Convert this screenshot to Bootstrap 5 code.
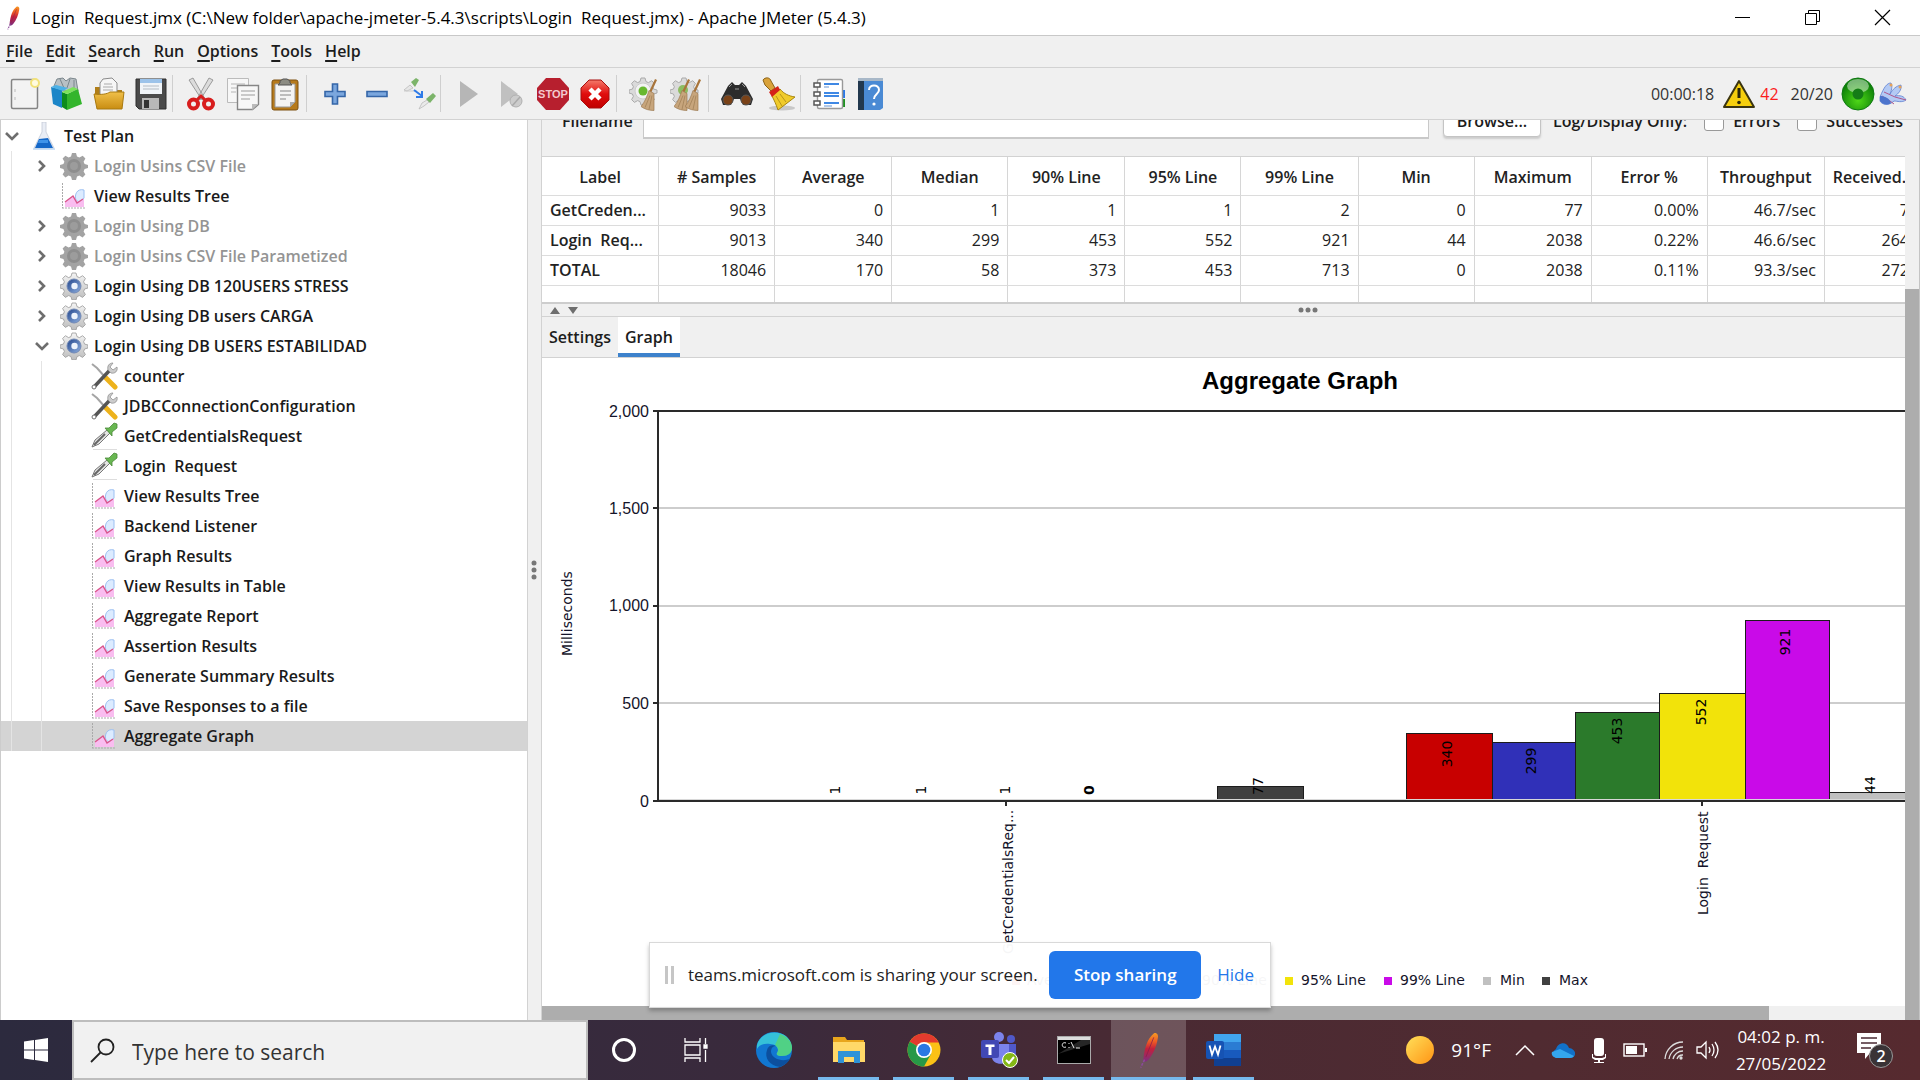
<!DOCTYPE html>
<html lang="en">
<head>
<meta charset="utf-8">
<meta name="viewport" content="width=device-width, initial-scale=1">
<title>Login Request.jmx - Apache JMeter (5.4.3)</title>
<link href="https://cdn.jsdelivr.net/npm/bootstrap@5.3.0/dist/css/bootstrap.min.css" rel="stylesheet">
<style>
  :root { --ui-grey: #f0f0f0; --ui-line: #d2d2d2; }
  body { font-family: "Open Sans", "Noto Sans", sans-serif; font-size: 16px; line-height: 30px; color: #1c1c1c; background: var(--ui-grey); }
  button { font: inherit; color: inherit; }
  .svg-defs { width: 0; height: 0; position: absolute; }
  .semi { font-weight: 600; }

  .title-bar { height: 35px; background: #fff; color: #000; padding-left: 6px; padding-right: 29px; }
  .title-text { font-size: 17px; white-space: pre; }
  .win-controls { gap: 53px; }
  .plain-btn { border: 0; background: none; padding: 0; line-height: 1; display: flex; align-items: center; justify-content: center; }
  .menu-bar { height: 33px; border-top: 1px solid #c8c8c8; border-bottom: 1px solid var(--ui-line); padding: 0 6px 2px; gap: 13px; }
  .menu-bar a { color: inherit; text-decoration: none; font-weight: 600; }
  .menu-bar u { text-underline-offset: 3px; text-decoration-thickness: 2px; }
  .tool-bar { height: 52px; border-bottom: 1px solid var(--ui-line); padding: 0 13px 0 4px; }
  .tool-btn { width: 42px; height: 38px; }
  .tool-sep { width: 8px; height: 37px; border-left: 1px solid #cfcfcf; }
  .run-state { color: #333; line-height: 20px; }
  .err-count { color: #fb1c1c; }

  .tree-pane { width: 528px; background: #fff; border-left: 1px solid #ccc; border-right: 1px solid var(--ui-line); padding-top: 1px; }
  .tree-row { height: 30px; line-height: 32px; white-space: pre; display: flex; align-items: center; font-weight: 600; color: #1a1a1a; position: relative; }
  .tree-row.dim { color: #949494; }
  .tree-row.picked { background-color: #d4d4d4; }
  .lvl-1, .lvl-2 { padding-left: 30px; background-image: linear-gradient(#e4e4e4, #e4e4e4); background-repeat: no-repeat; background-size: 1px 100%; background-position: 10px 0; }
  .lvl-2 { padding-left: 60px; background-image: linear-gradient(#e4e4e4, #e4e4e4), linear-gradient(#e4e4e4, #e4e4e4); background-size: 1px 100%, 1px 100%; background-position: 10px 0, 40px 0; }
  .twist { width: 22px; height: 30px; }
  .node-icon { width: 28px; height: 28px; margin: 0 6px 0 7px; }
  .v-split { width: 14px; border-right: 1px solid var(--ui-line); padding-right: 2px; }

  .form-strip { height: 36px; overflow: hidden; }
  .form-strip .strip-row { height: 36px; margin-top: -17px; padding-left: 20px; padding-right: 2px; white-space: nowrap; }
  .file-box { border: 2px solid #c9c9c9; border-width: 1px 1px 2px 1px; height: 36px; background: #fff; border-radius: 0; margin-left: 10px; margin-right: 14px; padding: 0 8px; }
  .browse-btn { width: 98px; height: 32px; line-height: 28px; background: #fff; border: 1px solid #c4c4c4; border-radius: 4px; box-shadow: 0 2px 2px #ccc; }
  .tick { width: 20px; height: 20px; appearance: none; background: #fff; border: 1px solid #999; border-radius: 3px; margin: 0 9px 0 17px; }

  .result-wrap { height: 148px; overflow: hidden; border-top: 1px solid var(--ui-line); border-bottom: 2px solid #cdcdcd; background: #fff; }
  .result-table { table-layout: fixed; width: 1399px; border-collapse: separate; border-spacing: 0; font-size: 16px; }
  .result-table th, .result-table td { border-right: 1px solid #d6d6d6; border-bottom: 1px solid #dcdcdc; padding: 0 8px; height: 30px; line-height: 29px; white-space: pre; text-align: right; overflow: hidden; color: #222; }
  .result-table th { height: 39px; text-align: center; font-weight: 600; padding: 2px 0 0; }
  .result-table th:nth-child(odd) { width: 117px; }
  .result-table th:nth-child(even) { width: 116px; }
  .result-table td:first-child { text-align: left; font-weight: 600; padding-right: 0; }
  .result-table th:last-child { text-align: left; padding-left: 8px; }
  .result-table td:last-child { padding-right: 31px; }
  .h-split { height: 13px; border-bottom: 1px solid var(--ui-line); }
  .h-split-end { width: 43%; }
  .tab-strip { height: 41px; border-bottom: 1px solid var(--ui-line); }
  .tab-btn { border: 0; background: none; padding: 4px 7px 0; height: 40px; line-height: 30px; font-weight: 600; border-bottom: 4px solid transparent; }
  .tab-btn.on { background: #fff; border-bottom-color: #3d82cc; }
  .chart-box { background: #fff; min-height: 0; overflow: hidden; }
  .chart-box text { font-family: "DejaVu Sans", sans-serif; font-size: 14px; fill: #14142a; white-space: pre; }
  .chart-box .axis-no text { font-family: "Liberation Sans", sans-serif; font-size: 16px; text-anchor: end; }
  .chart-box .chart-title { font-family: "Liberation Sans", sans-serif; font-size: 24px; font-weight: 700; fill: #000; text-anchor: middle; }
  .chart-box .bar-no text { text-anchor: middle; fill: #000; }
  .h-scroll { height: 14px; background: var(--ui-grey); }
  .h-thumb { width: 90%; background: #adadad; }
  .v-scroll { width: 15px; background: var(--ui-grey); border-right: 1px solid #c4c4c4; padding-top: 169px; }
  .v-thumb { background: #adadad; }
  .shrinkable { min-width: 0; min-height: 0; }

  .share-pop { left: 50%; bottom: 72px; transform: translateX(-50%); height: 66px; width: 622px; background: rgba(255,255,255,.96); border: 1px solid #d9d9d9; box-shadow: 0 3px 4px rgba(0,0,0,.25); padding: 0 16px 0 15px; color: #222; z-index: 5; white-space: nowrap; font-size: 17px; }
  .grip { width: 9px; height: 18px; border: solid #c6c6c6; border-width: 0 3px; margin-right: 14px; }
  .stop-btn { width: 152px; height: 48px; background: #2277ea; color: #fff; border: 0; border-radius: 6px; font-weight: 600; padding: 0; }
  .hide-link { color: #2277ea; text-decoration: none; }

  .task-bar { height: 60px; background: linear-gradient(90deg, #2c2a3e, #3a2a3c 40%, #4a2a33 60%, #502b31 80%, #562a2f); color: #fff; }
  .start-btn { width: 72px; }
  .search-box { width: 516px; height: 60px; background: #f1f1f1; border: 2px solid #bdbdbd; padding-left: 16px; gap: 17px; }
  .search-box input { border: 0; background: none; outline: 0; font-size: 21px; color: #333; padding: 3px 0 0; min-width: 0; }
  .search-box input::placeholder { color: #333; opacity: 1; }
  .task-app { width: 75px; height: 60px; position: relative; }
  .task-app.narrow { width: 72px; }
  .task-app.open::after { content: ""; position: absolute; left: 7px; right: 7px; bottom: 0; height: 3px; background: #76b9ed; }
  .task-app.current { background: rgba(255,255,255,.2); }
  .task-app.current::after { left: 0; right: 0; }
  .tray { line-height: 27px; padding-right: 26px; }
  .clock { font-size: 17px; width: 102px; }
  .temp { font-size: 19px; }
</style>
</head>
<body class="vh-100 overflow-hidden d-flex flex-column">

<svg class="svg-defs" aria-hidden="true">
  <defs>
    <linearGradient id="gGear" x1="0" y1="0" x2="0" y2="1"><stop offset="0" stop-color="#f4f4f4"/><stop offset="1" stop-color="#bdbdbd"/></linearGradient>
    <linearGradient id="gBlue" x1="0" y1="0" x2="1" y2="1"><stop offset="0" stop-color="#23468c"/><stop offset="1" stop-color="#8fb0e0"/></linearGradient>
    <linearGradient id="gFeather" x1="0" y1="0" x2="0" y2="1"><stop offset="0" stop-color="#f69923"/><stop offset=".3" stop-color="#ee5a24"/><stop offset=".55" stop-color="#c4203c"/><stop offset="1" stop-color="#7d2f80"/></linearGradient>
    <radialGradient id="gGreen" cx=".5" cy=".7" r=".6"><stop offset="0" stop-color="#4fd818"/><stop offset="1" stop-color="#0c7f08"/></radialGradient>
    <linearGradient id="gFold" x1="0" y1="0" x2="0" y2="1"><stop offset="0" stop-color="#f0c04a"/><stop offset="1" stop-color="#c98d12"/></linearGradient>
    <linearGradient id="gRed" x1="0" y1="0" x2="0" y2="1"><stop offset="0" stop-color="#f47a6a"/><stop offset=".5" stop-color="#e00d0d"/><stop offset="1" stop-color="#c00000"/></linearGradient>
    <path id="gearShape" d="M12 1h4l1 3.600 2.400 1 3.300-1.900 2.700 2.800-1.800 3.200 1 2.400L28 13v3l-3.400 1-1 2.400 1.800 3.200-2.800 2.800-3.200-1.800-2.400 1L16 28h-4l-1-3.400-2.400-1-3.200 1.800-2.800-2.800 1.800-3.200-1-2.400L0 16v-3l3.400-.9 1-2.400-1.800-3.200 2.800-2.800 3.200 1.900 2.400-1z"/>
    <symbol id="i-gear" viewBox="0 0 28 28"><use href="#gearShape" fill="url(#gGear)" stroke="#999" stroke-width=".8"/><circle cx="14" cy="14" r="7" fill="url(#gBlue)" stroke="#7289b5"/><circle cx="14.500" cy="14" r="3.200" fill="#eef4fc"/></symbol>
    <symbol id="i-gear-off" viewBox="0 0 28 28"><use href="#gearShape" fill="#a3a3a3"/><circle cx="14" cy="14" r="7" fill="#8e8e8e"/><circle cx="14" cy="14" r="4" fill="#9c9c9c"/></symbol>
    <symbol id="i-chart" viewBox="0 0 28 28"><path d="M2.500 1v25M2 26h24" stroke="#aaa" stroke-dasharray="2 1" fill="none"/><path d="M24 8c-7-2-10 5-8 10l4 3 4-5z" fill="#dcebff" stroke="#9cc0f2"/><path d="M5 25v-5l8-6 5 6 6-3v8z" fill="#f9bdf0"/><path d="M5 20l8-6 4 7 6-4" fill="none" stroke="#d8568c" stroke-width="1.400"/></symbol>
    <symbol id="i-flask" viewBox="0 0 28 28"><path d="M12 0h4v10l8 16H4l8-16z" fill="#e9edf5" stroke="#c3c9d6" stroke-width=".8"/><path d="M9 17l9-1 5 10H5z" fill="#1568c8"/><path d="M9 18h9v3H8z" fill="#3f94ea"/><path d="M3 27h22" stroke="#9cc4ee"/></symbol>
    <symbol id="i-tools" viewBox="0 0 28 28"><path d="M2 2l5 4 8 9" stroke="#a5a5a5" stroke-width="2" fill="none"/><path d="M16 16l9 9" stroke="#edb21c" stroke-width="5" stroke-linecap="round"/><path d="M4 25L19 9" stroke="#555" stroke-width="3.500" stroke-linecap="round"/><path d="M23 1l-3 4 3 3 4-3c1 4-2 7-6 6l-3-3c-1-4 1-7 5-7z" fill="#ccc" stroke="#888" stroke-width=".7"/><circle cx="4" cy="25" r="2" fill="#fff" stroke="#777"/></symbol>
    <symbol id="i-drop" viewBox="0 0 28 28"><path d="M3 27.500h24" stroke="#ddd"/><path d="M2 25l3-7L17 8l3 3L9 22z" fill="#e4e4e4" stroke="#777" stroke-width="1"/><path d="M4 23L15 12" stroke="#666" stroke-width="2"/><path d="M15 6l4 0 5-5 3 1 0 4-5 4 0 4z" fill="#69b752" stroke="#4b8a3a" stroke-width=".8"/></symbol>
    <symbol id="i-right" viewBox="0 0 14 14"><path d="M4 2l5 5-5 5" fill="none" stroke="#6e6e6e" stroke-width="2.600"/></symbol>
    <symbol id="i-down" viewBox="0 0 14 14"><path d="M1 4l6 6 6-6" fill="none" stroke="#6e6e6e" stroke-width="2.600"/></symbol>
    <symbol id="i-feather" viewBox="0 0 16 28"><path d="M12 1c2-1 4 1 3 4-1 6-3 11-7 16-2 2-4 2-4 0C5 12 7 5 12 1z" fill="url(#gFeather)"/><path d="M12 4L6 19" stroke="#8c1f4a" stroke-width=".6"/><path d="M5 21l-3 6" stroke="#8a4a9a" stroke-width="1.200" stroke-dasharray="2 1"/></symbol>
    <symbol id="i-broom" viewBox="0 0 18 32"><path d="M15 1l-6 13" stroke="#a8743a" stroke-width="2.200"/><path d="M8 12l5 3 0 17c-4 0-9-1-13-4 4-5 6-10 8-16z" fill="#c7a57c" stroke="#9c7a52" stroke-width=".7"/><path d="M9 17L4 29M11 17L8 31" stroke="#a28158" stroke-width=".8"/></symbol>
  </defs>
</svg>

<header class="title-bar d-flex align-items-center flex-shrink-0">
  <svg width="14" height="26" viewBox="0 0 16 28"><use href="#i-feather"/></svg>
  <span class="title-text ms-2 ps-1 flex-grow-1">Login  Request.jmx (C:\New folder\apache-jmeter-5.4.3\scripts\Login  Request.jmx) - Apache JMeter (5.4.3)</span>
  <div class="win-controls d-flex align-items-center">
    <button class="plain-btn" aria-label="Minimize"><svg width="17" height="17"><path d="M1 8.500h15" stroke="#000"/></svg></button>
    <button class="plain-btn" aria-label="Restore"><svg width="17" height="17" fill="none" stroke="#000"><path d="M1.500 4.500h11v11h-11zM4.500 4.500v-3h11v11h-3"/></svg></button>
    <button class="plain-btn" aria-label="Close"><svg width="17" height="17"><path d="M1 1l15 15M16 1L1 16" stroke="#000" stroke-width="1.200"/></svg></button>
  </div>
</header>

<nav class="menu-bar d-flex align-items-center flex-shrink-0">
  <a href="#"><u>F</u>ile</a><a href="#"><u>E</u>dit</a><a href="#"><u>S</u>earch</a><a href="#"><u>R</u>un</a><a href="#"><u>O</u>ptions</a><a href="#"><u>T</u>ools</a><a href="#"><u>H</u>elp</a>
</nav>

<div class="tool-bar d-flex align-items-center flex-shrink-0">
  <button class="plain-btn tool-btn" aria-label="New"><svg width="32" height="34" viewBox="0 0 32 34"><rect x="2.500" y="2.500" width="26" height="29" rx="1.500" fill="#f3f3f3" stroke="#848484" stroke-width="1.500"/><path d="M6 12v3M6 20v3" stroke="#bbb"/><circle cx="26" cy="6" r="4" fill="#fffbe0" stroke="#f2e27a" stroke-width="2"/></svg></button>
  <button class="plain-btn tool-btn" aria-label="Templates"><svg width="34" height="34" viewBox="0 0 34 34"><path d="M4 9l3-7 6-1 3 3 4-3 6 1 2 12H6z" fill="#b9c0c4" stroke="#7b868c"/><path d="M10 2l4 9M20 2l-3 9M24 3v8" stroke="#7b868c"/><path d="M1 10l11 3v18L3 27z" fill="#1c86c8"/><path d="M1 10l5-2 12 3-5 3z" fill="#4db1e6"/><path d="M12 15l5 2v16l-5-3z" fill="#0e8c1d"/><path d="M17 17l11-5 4 15-15 6z" fill="#33b52c"/><path d="M12 15l11-5 5 2-11 5z" fill="#7be35a"/></svg></button>
  <button class="plain-btn tool-btn" aria-label="Open"><svg width="34" height="34" viewBox="0 0 34 34"><path d="M3 10h7l3 3h17v12H3z" fill="#b07e18"/><path d="M8 6l3-4 9-1 5 5v13H8z" fill="#f6f6f6" stroke="#8b8b8b"/><path d="M12 7h8M11 10h10M11 13h10" stroke="#aaa"/><path d="M2 17c8 1 13 0 16-2h14l-2 17H5z" fill="url(#gFold)" stroke="#a97a10"/></svg></button>
  <button class="plain-btn tool-btn" aria-label="Save"><svg width="34" height="34" viewBox="0 0 34 34"><path d="M2 2h30v30H5l-3-3z" fill="#4a4a4a" stroke="#2e2e2e"/><rect x="6" y="2" width="22" height="15" fill="#f0f4f8"/><path d="M6 2h22v4H6z" fill="#9cc3ea"/><path d="M9 9h16M9 12h16" stroke="#b4bcc4"/><rect x="8" y="21" width="17" height="11" fill="#b8b8b8"/><rect x="10" y="23" width="5" height="8" fill="#333"/></svg></button>
  <span class="tool-sep"></span>
  <button class="plain-btn tool-btn" aria-label="Cut"><svg width="30" height="34" viewBox="0 0 30 34"><path d="M3 3l4-2 12 21-3 1zM27 3l-4-2-12 21 3 1z" fill="#dcdcdc" stroke="#888" stroke-width=".8"/><ellipse cx="7.500" cy="27" rx="4.500" ry="4.500" fill="none" stroke="#d81e1e" stroke-width="4"/><ellipse cx="22.500" cy="27" rx="4.500" ry="4.500" fill="none" stroke="#d81e1e" stroke-width="4"/><path d="M11 23l4-4 4 4" stroke="#d81e1e" stroke-width="3" fill="none"/></svg></button>
  <button class="plain-btn tool-btn" aria-label="Copy"><svg width="34" height="34" viewBox="0 0 34 34"><path d="M1.500 1.500h21v24h-21z" fill="#f7f7f7" stroke="#bbb"/><path d="M5 7h14M5 11h8M5 15h5" stroke="#ccc" stroke-width="1.500"/><path d="M11.500 8.500h21v19l-6 5h-15z" fill="#f7f7f7" stroke="#868686" stroke-width="1.400"/><path d="M15 14h14M15 18h14M15 22h9" stroke="#bbb" stroke-width="1.500"/><path d="M32 27h-6v6z" fill="#bbb"/></svg></button>
  <button class="plain-btn tool-btn" aria-label="Paste"><svg width="30" height="34" viewBox="0 0 30 34"><rect x="2" y="3" width="26" height="30" rx="2" fill="#b67a1c" stroke="#7c5010"/><path d="M5 7h20v18l-5 5H5z" fill="#f4f4f4" stroke="#999"/><path d="M10 6V4l3-2h4l3 2v2l2 2H8z" fill="#8c8c84" stroke="#555"/><path d="M10 14h11M10 18h11M10 22h6" stroke="#aaa" stroke-width="1.500"/><path d="M25 25h-5v5z" fill="#aaa"/></svg></button>
  <span class="tool-sep"></span>
  <button class="plain-btn tool-btn" aria-label="Expand all"><svg width="24" height="24" viewBox="0 0 24 24"><path d="M9.500 2h5v7.500H22v5h-7.500V22h-5v-7.500H2v-5h7.500z" fill="#7ba7de" stroke="#3566a8" stroke-width="1.600"/></svg></button>
  <button class="plain-btn tool-btn" aria-label="Collapse all"><svg width="24" height="24" viewBox="0 0 24 24"><path d="M2 9.500h20v5H2z" fill="#7ba7de" stroke="#3566a8" stroke-width="1.600"/></svg></button>
  <button class="plain-btn tool-btn" aria-label="Toggle"><svg width="34" height="34" viewBox="0 0 34 34"><path d="M2 13l6-5 3 3-6 3z" fill="#e6e6e6" stroke="#bbb" stroke-width=".8"/><path d="M9 5l5-4 3 2-4 7z" fill="#7cb46a"/><path d="M2 14h13" stroke="#ccc"/><path d="M12 13l8 6m0-5v6h-6" fill="none" stroke="#2f7be8" stroke-width="2"/><path d="M17 32l3-6 5-3 2 2-5 4z" fill="#eaeaea" stroke="#bbb" stroke-width=".8"/><path d="M24 22l7-6 3 3-6 7z" fill="#7cb46a"/></svg></button>
  <span class="tool-sep"></span>
  <button class="plain-btn tool-btn" aria-label="Start"><svg width="24" height="30" viewBox="0 0 24 30"><path d="M3 2l18 13L3 28z" fill="#b6b6b6"/></svg></button>
  <button class="plain-btn tool-btn" aria-label="Start no pauses"><svg width="26" height="30" viewBox="0 0 26 30"><path d="M3 2l17 13L3 28z" fill="#c0c0c0"/><circle cx="18" cy="22" r="6" fill="#ccc" stroke="#b0b0b0"/><path d="M14 27l8-9" stroke="#aaa" stroke-width="1.500"/></svg></button>
  <button class="plain-btn tool-btn" aria-label="Stop"><svg width="34" height="34" viewBox="0 0 34 34"><path d="M10 1h14l9 10v12l-9 10H10L1 23V11z" fill="#b71f2e"/><text x="17" y="21" text-anchor="middle" font-family="Liberation Sans, sans-serif" font-size="11" font-weight="700" fill="#f3c8cc">STOP</text></svg></button>
  <button class="plain-btn tool-btn" aria-label="Shutdown"><svg width="30" height="30" viewBox="0 0 30 30"><path d="M9 1h12l8 8v12l-8 8H9l-8-8V9z" fill="url(#gRed)" stroke="#a80f0f"/><path d="M10 10l10 10M20 10L10 20" stroke="#fff" stroke-width="4.500"/></svg></button>
  <span class="tool-sep"></span>
  <button class="plain-btn tool-btn" aria-label="Clear"><svg width="32" height="34" viewBox="0 0 32 34"><use href="#gearShape" fill="#dadada" stroke="#aaa"/><circle cx="14" cy="14" r="8" fill="#f2f2f2" stroke="#ccc"/><circle cx="14" cy="14" r="4.500" fill="#67b82e"/><use href="#i-broom" x="12" y="1" width="18" height="33"/></svg></button>
  <button class="plain-btn tool-btn" aria-label="Clear all"><svg width="34" height="34" viewBox="0 0 34 34"><use href="#gearShape" fill="#dadada" stroke="#aaa"/><circle cx="13" cy="13" r="5" fill="#8cbc60"/><use href="#i-broom" x="4" y="1" width="18" height="33"/><use href="#i-broom" x="15" y="1" width="18" height="33"/></svg></button>
  <span class="tool-sep"></span>
  <button class="plain-btn tool-btn" aria-label="Search"><svg width="34" height="26" viewBox="0 0 34 26"><path d="M8 5l4-4 3 3h4l3-3 4 4 7 13-2 6h-8l-3-6h-6l-3 6H3l-2-6z" fill="#2c2c2c"/><circle cx="8" cy="19" r="5" fill="#7a4218" stroke="#555"/><circle cx="26" cy="19" r="5" fill="#7a4218" stroke="#555"/><path d="M9 6l3-3M22 3l3 3M15 8h4" stroke="#999"/></svg></button>
  <button class="plain-btn tool-btn" aria-label="Reset search"><svg width="34" height="34" viewBox="0 0 34 34"><ellipse cx="20" cy="31" rx="13" ry="2.500" fill="#c8c8c8"/><path d="M1 3c2-3 7-3 8 1l4 7-4 3-6-6z" fill="#d9a23a" stroke="#8a6218"/><path d="M10 19l8-7c4 5 9 7 15 8l-17 13c-2-6-4-10-6-14z" fill="#f0cb2a" stroke="#a88610"/><path d="M14 19l6 10M18 17l6 8" stroke="#b8961a"/><path d="M7 15l9-6 2 4-8 7z" fill="#d42218"/></svg></button>
  <span class="tool-sep"></span>
  <button class="plain-btn tool-btn" aria-label="Function helper"><svg width="34" height="34" viewBox="0 0 34 34"><path d="M30 13h3v8h-3z" fill="#2878e8"/><path d="M30 22h3v8h-3z" fill="#1d9020"/><rect x="5.500" y="2.500" width="25" height="29" rx="1.500" fill="#fff" stroke="#999" stroke-width="1.400"/><path d="M12 7h15M12 16h15M12 19h15M12 26h15" stroke="#3f88e4" stroke-width="2"/><path d="M12 10h5M12 29h8" stroke="#9ab8e0" stroke-width="1.500"/><path d="M2 6h6v4H2zM2 15h6v4H2zM2 24h6v4H2z" fill="#fff" stroke="#555" stroke-width="1.500"/></svg></button>
  <button class="plain-btn tool-btn" aria-label="Help"><svg width="28" height="34" viewBox="0 0 28 34"><path d="M1 2h25v29l-3 2H1z" fill="#4a8ad4"/><path d="M1 2h6v31H1z" fill="#22384e"/><path d="M1 1h25v3H1z" fill="#a8b8c8"/><path d="M12 13c0-6 10-6 10 0 0 4-5 4-5 9" fill="none" stroke="#fff" stroke-width="2"/><circle cx="17" cy="27" r="1.600" fill="#fff"/></svg></button>
  <div class="run-state d-flex align-items-center ms-auto">
    <span>00:00:18</span>
    <svg class="ms-2" width="34" height="30" viewBox="0 0 34 30"><path d="M17 2l15 26H2z" fill="#f6cf0d" stroke="#3b3510" stroke-width="2" stroke-linejoin="round"/><path d="M17 9v10" stroke="#2c2808" stroke-width="3"/><circle cx="17" cy="23.500" r="1.800" fill="#2c2808"/></svg>
    <span class="err-count ms-1">42</span>
    <span class="ms-2 ps-1">20/20</span>
    <svg class="ms-2" width="34" height="34" viewBox="0 0 34 34"><circle cx="17" cy="17" r="16" fill="url(#gGreen)" stroke="#0f7a12"/><ellipse cx="17" cy="9" rx="11" ry="7" fill="#fff" opacity=".45"/><circle cx="17" cy="17" r="5.500" fill="#157c17"/></svg>
    <svg class="ms-1" width="28" height="24" viewBox="0 0 28 24"><path d="M1 15C5 5 8 1 12 1c2 4 0 8-1 11 3-5 6-8 11-9 1 5-3 9-6 11 5-1 9 0 11 4-4 3-9 1-12 1-5 5-12 4-14 0z" fill="#b4caf4" stroke="#5d7fd0" stroke-width=".8"/><path d="M3 14l8 5 4 3M5 10l11 5 11 3" stroke="#b0568c" fill="none"/><path d="M1 14c5 0 9 2 11 7-4 3-9 1-11-2z" fill="#4d74cc"/><circle cx="12" cy="3" r="1.500" fill="#e8a35a"/><circle cx="21" cy="5" r="1.500" fill="#e8a35a"/></svg>
  </div>
</div>

<main class="d-flex flex-grow-1 shrinkable">
  <aside class="tree-pane flex-shrink-0">
    <ul class="list-unstyled m-0">
      <li class="tree-row"><svg class="twist" viewBox="-4 -8 22 30"><use href="#i-down" width="14" height="14"/></svg><svg class="node-icon"><use href="#i-flask"/></svg>Test Plan</li>
      <li class="tree-row lvl-1 dim"><svg class="twist" viewBox="-4 -8 22 30"><use href="#i-right" width="14" height="14"/></svg><svg class="node-icon"><use href="#i-gear-off"/></svg>Login Usins CSV File</li>
      <li class="tree-row lvl-1"><span class="twist"></span><svg class="node-icon"><use href="#i-chart"/></svg>View Results Tree</li>
      <li class="tree-row lvl-1 dim"><svg class="twist" viewBox="-4 -8 22 30"><use href="#i-right" width="14" height="14"/></svg><svg class="node-icon"><use href="#i-gear-off"/></svg>Login Using DB</li>
      <li class="tree-row lvl-1 dim"><svg class="twist" viewBox="-4 -8 22 30"><use href="#i-right" width="14" height="14"/></svg><svg class="node-icon"><use href="#i-gear-off"/></svg>Login Usins CSV File Parametized</li>
      <li class="tree-row lvl-1"><svg class="twist" viewBox="-4 -8 22 30"><use href="#i-right" width="14" height="14"/></svg><svg class="node-icon"><use href="#i-gear"/></svg>Login Using DB 120USERS STRESS</li>
      <li class="tree-row lvl-1"><svg class="twist" viewBox="-4 -8 22 30"><use href="#i-right" width="14" height="14"/></svg><svg class="node-icon"><use href="#i-gear"/></svg>Login Using DB users CARGA</li>
      <li class="tree-row lvl-1"><svg class="twist" viewBox="-4 -8 22 30"><use href="#i-down" width="14" height="14"/></svg><svg class="node-icon"><use href="#i-gear"/></svg>Login Using DB USERS ESTABILIDAD</li>
      <li class="tree-row lvl-2"><span class="twist"></span><svg class="node-icon"><use href="#i-tools"/></svg>counter</li>
      <li class="tree-row lvl-2"><span class="twist"></span><svg class="node-icon"><use href="#i-tools"/></svg>JDBCConnectionConfiguration</li>
      <li class="tree-row lvl-2"><span class="twist"></span><svg class="node-icon"><use href="#i-drop"/></svg>GetCredentialsRequest</li>
      <li class="tree-row lvl-2"><span class="twist"></span><svg class="node-icon"><use href="#i-drop"/></svg>Login  Request</li>
      <li class="tree-row lvl-2"><span class="twist"></span><svg class="node-icon"><use href="#i-chart"/></svg>View Results Tree</li>
      <li class="tree-row lvl-2"><span class="twist"></span><svg class="node-icon"><use href="#i-chart"/></svg>Backend Listener</li>
      <li class="tree-row lvl-2"><span class="twist"></span><svg class="node-icon"><use href="#i-chart"/></svg>Graph Results</li>
      <li class="tree-row lvl-2"><span class="twist"></span><svg class="node-icon"><use href="#i-chart"/></svg>View Results in Table</li>
      <li class="tree-row lvl-2"><span class="twist"></span><svg class="node-icon"><use href="#i-chart"/></svg>Aggregate Report</li>
      <li class="tree-row lvl-2"><span class="twist"></span><svg class="node-icon"><use href="#i-chart"/></svg>Assertion Results</li>
      <li class="tree-row lvl-2"><span class="twist"></span><svg class="node-icon"><use href="#i-chart"/></svg>Generate Summary Results</li>
      <li class="tree-row lvl-2"><span class="twist"></span><svg class="node-icon"><use href="#i-chart"/></svg>Save Responses to a file</li>
      <li class="tree-row lvl-2 picked"><span class="twist"></span><svg class="node-icon"><use href="#i-chart"/></svg>Aggregate Graph</li>
    </ul>
  </aside>
  <div class="v-split d-flex align-items-center justify-content-center flex-shrink-0"><svg width="6" height="20" fill="#777"><circle cx="3" cy="3" r="2.500"/><circle cx="3" cy="10" r="2.500"/><circle cx="3" cy="17" r="2.500"/></svg></div>

  <section class="d-flex flex-column flex-grow-1 shrinkable">
    <div class="form-strip flex-shrink-0">
      <div class="strip-row d-flex align-items-center semi">
        <label for="fname">Filename</label>
        <input id="fname" class="file-box flex-grow-1" type="text">
        <button class="browse-btn">Browse...</button>
        <span class="ms-2 ps-1">Log/Display Only:</span>
        <input class="tick" type="checkbox" id="errs"><label for="errs">Errors</label>
        <input class="tick" type="checkbox" id="succ"><label for="succ">Successes</label>
      </div>
    </div>
    <div class="result-wrap flex-shrink-0">
      <table class="result-table">
        <thead><tr><th>Label</th><th># Samples</th><th>Average</th><th>Median</th><th>90% Line</th><th>95% Line</th><th>99% Line</th><th>Min</th><th>Maximum</th><th>Error %</th><th>Throughput</th><th>Received...</th></tr></thead>
        <tbody>
          <tr><td>GetCreden...</td><td>9033</td><td>0</td><td>1</td><td>1</td><td>1</td><td>2</td><td>0</td><td>77</td><td>0.00%</td><td>46.7/sec</td><td>7</td></tr>
          <tr><td>Login  Req...</td><td>9013</td><td>340</td><td>299</td><td>453</td><td>552</td><td>921</td><td>44</td><td>2038</td><td>0.22%</td><td>46.6/sec</td><td>264</td></tr>
          <tr><td>TOTAL</td><td>18046</td><td>170</td><td>58</td><td>373</td><td>453</td><td>713</td><td>0</td><td>2038</td><td>0.11%</td><td>93.3/sec</td><td>272</td></tr>
          <tr><td></td><td></td><td></td><td></td><td></td><td></td><td></td><td></td><td></td><td></td><td></td><td></td></tr>
        </tbody>
      </table>
    </div>
    <div class="h-split d-flex align-items-center flex-shrink-0 px-2">
      <svg width="28" height="8" fill="#6e6e6e"><path d="M0 8l5-7 5 7zM18 1h10l-5 7z"/></svg>
      <svg class="ms-auto" width="20" height="6" fill="#777"><circle cx="3" cy="3" r="2.500"/><circle cx="10" cy="3" r="2.500"/><circle cx="17" cy="3" r="2.500"/></svg>
      <span class="h-split-end"></span>
    </div>
    <div class="tab-strip d-flex flex-shrink-0"><button class="tab-btn">Settings</button><button class="tab-btn on">Graph</button></div>
    <div class="chart-box flex-grow-1">
      <svg width="1600" height="648" role="img" aria-label="Aggregate Graph">
        <text class="chart-title" x="758" y="31">Aggregate Graph</text>
        <g stroke="#cdcdcd" stroke-width="2"><path d="M116 150h1480M116 248h1480M116 345h1480"/></g>
        <g stroke="#1c1c1c">
          <rect x="675.500" y="428.500" width="86" height="13" fill="#404040"/>
          <rect x="864.500" y="375.500" width="86" height="66" fill="#c80000"/>
          <rect x="950.500" y="384.500" width="83" height="57" fill="#3030b8"/>
          <rect x="1033.500" y="354.500" width="84" height="87" fill="#2b7a2b"/>
          <rect x="1117.500" y="335.500" width="86" height="106" fill="#f2e30a"/>
          <rect x="1203.500" y="262.500" width="84" height="179" fill="#c90ae8"/>
          <rect x="1287.500" y="434.500" width="84" height="7" fill="#c0c0c0"/>
        </g>
        <path d="M117 441.500h1480" stroke="#d8d8d8"/>
        <g stroke="#2a2a2a" stroke-width="2" fill="none"><path d="M1596 53H116V443h1480M111 53h5M111 150h5M111 248h5M111 345h5M111 443h5M464 443v5M1160 443v5"/></g>
        <g class="axis-no"><text x="107" y="59">2,000</text><text x="107" y="156">1,500</text><text x="107" y="253">1,000</text><text x="107" y="351">500</text><text x="107" y="449">0</text></g>
        <text transform="translate(30 298) rotate(-90)">Milliseconds</text>
        <g class="bar-no">
          <text transform="translate(298 432) rotate(-90)">1</text>
          <text transform="translate(384 432) rotate(-90)">1</text>
          <text transform="translate(468 432) rotate(-90)">1</text>
          <text transform="translate(552 432) rotate(-90)" font-weight="700">0</text>
          <text transform="translate(721 428) rotate(-90)">77</text>
          <text transform="translate(910 396) rotate(-90)">340</text>
          <text transform="translate(994 403) rotate(-90)">299</text>
          <text transform="translate(1080 373) rotate(-90)">453</text>
          <text transform="translate(1164 354) rotate(-90)">552</text>
          <text transform="translate(1248 284) rotate(-90)">921</text>
          <text transform="translate(1333 427) rotate(-90)">44</text>
        </g>
        <text transform="translate(471 596) rotate(-90)">GetCredentialsReq...</text>
        <text transform="translate(1166 557) rotate(-90)">Login  Request</text>
        <rect x="470" y="619" width="8" height="8" fill="#c80000"/><text x="485" y="627">Average</text>
        <rect x="558" y="619" width="8" height="8" fill="#3030b8"/><text x="573" y="627">Median</text>
        <rect x="645" y="619" width="8" height="8" fill="#2b7a2b"/><text x="660" y="627">90% Line</text>
        <rect x="743" y="619" width="8" height="8" fill="#f2e30a"/><text x="759" y="627">95% Line</text>
        <rect x="842" y="619" width="8" height="8" fill="#c90ae8"/><text x="858" y="627">99% Line</text>
        <rect x="941" y="619" width="8" height="8" fill="#c0c0c0"/><text x="958" y="627">Min</text>
        <rect x="1000" y="619" width="8" height="8" fill="#404040"/><text x="1017" y="627">Max</text>
      </svg>
    </div>
    <div class="h-scroll d-flex flex-shrink-0"><div class="h-thumb"></div></div>
  </section>
  <div class="v-scroll flex-shrink-0"><div class="v-thumb h-100"></div></div>
</main>

<div class="share-pop position-absolute d-flex align-items-center">
  <span class="grip"></span>
  <span>teams.microsoft.com is sharing your screen.</span>
  <button class="stop-btn ms-auto">Stop sharing</button>
  <a class="hide-link ms-3" href="#">Hide</a>
</div>

<footer class="task-bar d-flex align-items-center flex-shrink-0">
  <button class="plain-btn start-btn" aria-label="Start"><svg width="24" height="24" viewBox="0 0 24 24" fill="#fff"><path d="M0 3.500l10-1.400v9.400H0zM11 2l13-2v11.500H11zM0 12.500h10v9.400L0 20.500zM11 12.500h13V24l-13-2z"/></svg></button>
  <div class="search-box d-flex align-items-center">
    <svg width="25" height="25" viewBox="0 0 25 25" fill="none" stroke="#222" stroke-width="1.800"><circle cx="16" cy="9" r="7.500"/><path d="M10.500 14.500L1 24"/></svg>
    <input type="text" placeholder="Type here to search" aria-label="Type here to search" class="flex-grow-1">
  </div>
  <button class="plain-btn task-app narrow" aria-label="Cortana"><svg width="26" height="26"><circle cx="13" cy="13" r="10.500" fill="none" stroke="#fff" stroke-width="3"/></svg></button>
  <button class="plain-btn task-app narrow" aria-label="Task view"><svg width="26" height="26" fill="none" stroke="#fff" stroke-width="1.300"><path d="M2 1v4h15V1M2 25v-4h15v4M2 8h15v10H2zM22.500 1v6M22.500 13v12"/><path d="M21 8h3v3h-3z" fill="#fff"/></svg></button>
  <span class="pe-1"></span>
  <button class="plain-btn task-app" aria-label="Edge"><svg width="36" height="36" viewBox="0 0 36 36"><circle cx="18" cy="18" r="18" fill="#1177d1"/><path d="M1 13C5-4 34-4 36 15c0 6-4 9-10 9-4 0-6-1-5-3 3-4-1-9-7-9-6-1-11 1-13 5z" fill="#35c1d8"/><path d="M24 2c8 3 12 8 12 14 0 5-4 8-10 8-4 0-6-1-5-3 2-3 1-6-2-8z" fill="#5ad66a" opacity=".75"/><path d="M11 18c-3 8 3 16 13 17 5-2 8-5 10-8-8 3-18 0-19-7 0-4 2-6 5-6-4-2-8 0-9 4z" fill="#0c4f9e"/></svg></button>
  <button class="plain-btn task-app open" aria-label="File Explorer"><svg width="32" height="28" viewBox="0 0 32 28"><path d="M0 1h12l2 3h17v22H0z" fill="#e8a51c"/><path d="M0 6h32v20H0z" fill="#ffd868"/><path d="M5 27V15h22v12h-6v-6H11v6z" fill="#2f93d8"/></svg></button>
  <button class="plain-btn task-app open" aria-label="Chrome"><svg width="34" height="34" viewBox="0 0 34 34"><circle cx="17" cy="17" r="16.500" fill="#fbc116"/><path d="M17 17L2.700 8.800A16.500 16.500 0 0 1 31.300 8.800L32 9.500H17z" fill="#e33b2e"/><path d="M2.700 8.800A16.500 16.500 0 0 0 17 33.500l7-12.500-7-4z" fill="#279847"/><circle cx="17" cy="17" r="8" fill="#fff"/><circle cx="17" cy="17" r="6.300" fill="#2a78e4"/></svg></button>
  <button class="plain-btn task-app open" aria-label="Teams"><svg width="38" height="36" viewBox="0 0 38 36"><circle cx="19" cy="5" r="5" fill="#7b83eb"/><circle cx="31" cy="7" r="4" fill="#5059c9"/><path d="M27 12h9v10c0 5-6 7-9 5z" fill="#5059c9"/><path d="M12 12h17v13c0 9-17 9-17 0z" fill="#7b83eb"/><rect x="1" y="8" width="18" height="18" rx="2" fill="#4148b4"/><path d="M5.500 12.500h9v2.500h-3v8h-3v-8h-3z" fill="#fff"/><circle cx="30" cy="28" r="7.500" fill="#84b816" stroke="#fff"/><path d="M26 28l3 3 5-6" fill="none" stroke="#fff" stroke-width="2"/></svg></button>
  <button class="plain-btn task-app open" aria-label="Command Prompt"><svg width="34" height="28" viewBox="0 0 34 28"><rect x=".5" y=".5" width="33" height="27" fill="#000" stroke="#aaa"/><path d="M1 1h32v3H1z" fill="#ddd"/><path d="M9 7c-5-2-5 6 0 4M12 7v1M12 11v1M14 6l3 6M19 12h4" fill="none" stroke="#eee"/><path d="M1 18L33 8v-4H24z" fill="#fff" opacity=".15"/></svg></button>
  <button class="plain-btn task-app open current" aria-label="JMeter"><svg width="21" height="37" viewBox="0 0 16 28"><use href="#i-feather"/></svg></button>
  <button class="plain-btn task-app open" aria-label="Word"><svg width="36" height="34" viewBox="0 0 36 34"><path d="M8 1h27v8H8z" fill="#41a5ee"/><path d="M8 9h27v8H8z" fill="#2b7cd3"/><path d="M8 17h27v8H8z" fill="#185abd"/><path d="M8 25h27v8H8z" fill="#103f91"/><rect x="0" y="8" width="18" height="18" rx="2" fill="#1653b4"/><path d="M3.500 12.500l2.500 9 3-8 3 8 2.500-9" fill="none" stroke="#fff" stroke-width="1.800"/></svg></button>

  <div class="tray d-flex align-items-center ms-auto">
    <svg width="30" height="30"><defs><linearGradient id="gSun" x1="0" y1="0" x2="1" y2="1"><stop offset="0" stop-color="#ffe05a"/><stop offset="1" stop-color="#ff9414"/></linearGradient></defs><circle cx="15" cy="15" r="14" fill="url(#gSun)"/></svg>
    <span class="temp ms-3">91°F</span>
    <svg class="ms-4" width="20" height="14" fill="none" stroke="#fff" stroke-width="1.500"><path d="M1 12l9-9 9 9"/></svg>
    <svg class="ms-3" width="24" height="17" viewBox="0 0 24 17"><path d="M5 16a5 5 0 0 1 0-9C7 0 16-1 18 6c8 1 8 10 1 10z" fill="#1271c8"/><path d="M5 16c-3-1-5-3-4-6l8-3 14 7c-1 1-2 2-4 2z" fill="#34a6ee"/></svg>
    <svg class="ms-3" width="16" height="26" fill="#fff"><rect x="3" y="1" width="10" height="18" rx="3"/><path d="M1 17h1v3l3 1h6l3-1v-3h1v4l-3 2H9v2h4v1H3v-1h4v-2H4l-3-2z"/></svg>
    <svg class="ms-3" width="25" height="16"><rect x="1" y="2" width="20" height="12" fill="none" stroke="#fff" stroke-width="1.400"/><path d="M3 4h11v8H3zM22 6h2v4h-2z" fill="#fff"/></svg>
    <svg class="ms-3" width="20" height="20" fill="none" stroke="#ddd" stroke-width="1.300"><path d="M1 19A18 18 0 0 1 19 2M5 19A14 14 0 0 1 19 7M9 19A10 10 0 0 1 19 11M13 19a6 6 0 0 1 6-4"/><circle cx="17" cy="18" r="1" fill="#fff"/></svg>
    <svg class="ms-2 ps-1" width="30" height="20" fill="none" stroke="#fff" stroke-width="1.300"><path d="M1 7h4l5-5v16l-5-5H1zM13 7q2 3 0 6M16 4q4 6 0 12M19 2q6 8 0 16"/></svg>
    <div class="clock text-center ms-2">04:02 p. m.<br>27/05/2022</div>
    <svg class="ms-4" width="38" height="38" viewBox="0 0 38 38"><path d="M1 2h24v20H14l-5 6v-6H1z" fill="#fff"/><path d="M5 7h16M5 12h16M5 17h10" stroke="#4a2a33" stroke-width="1.500"/><circle cx="25" cy="25" r="11.500" fill="#3a3336" stroke="#999"/><text x="25" y="31" text-anchor="middle" font-family="Open Sans, sans-serif" font-size="16" font-weight="600" fill="#fff">2</text></svg>
  </div>
</footer>

<script src="https://cdn.jsdelivr.net/npm/bootstrap@5.3.0/dist/js/bootstrap.bundle.min.js"></script>
</body>
</html>
